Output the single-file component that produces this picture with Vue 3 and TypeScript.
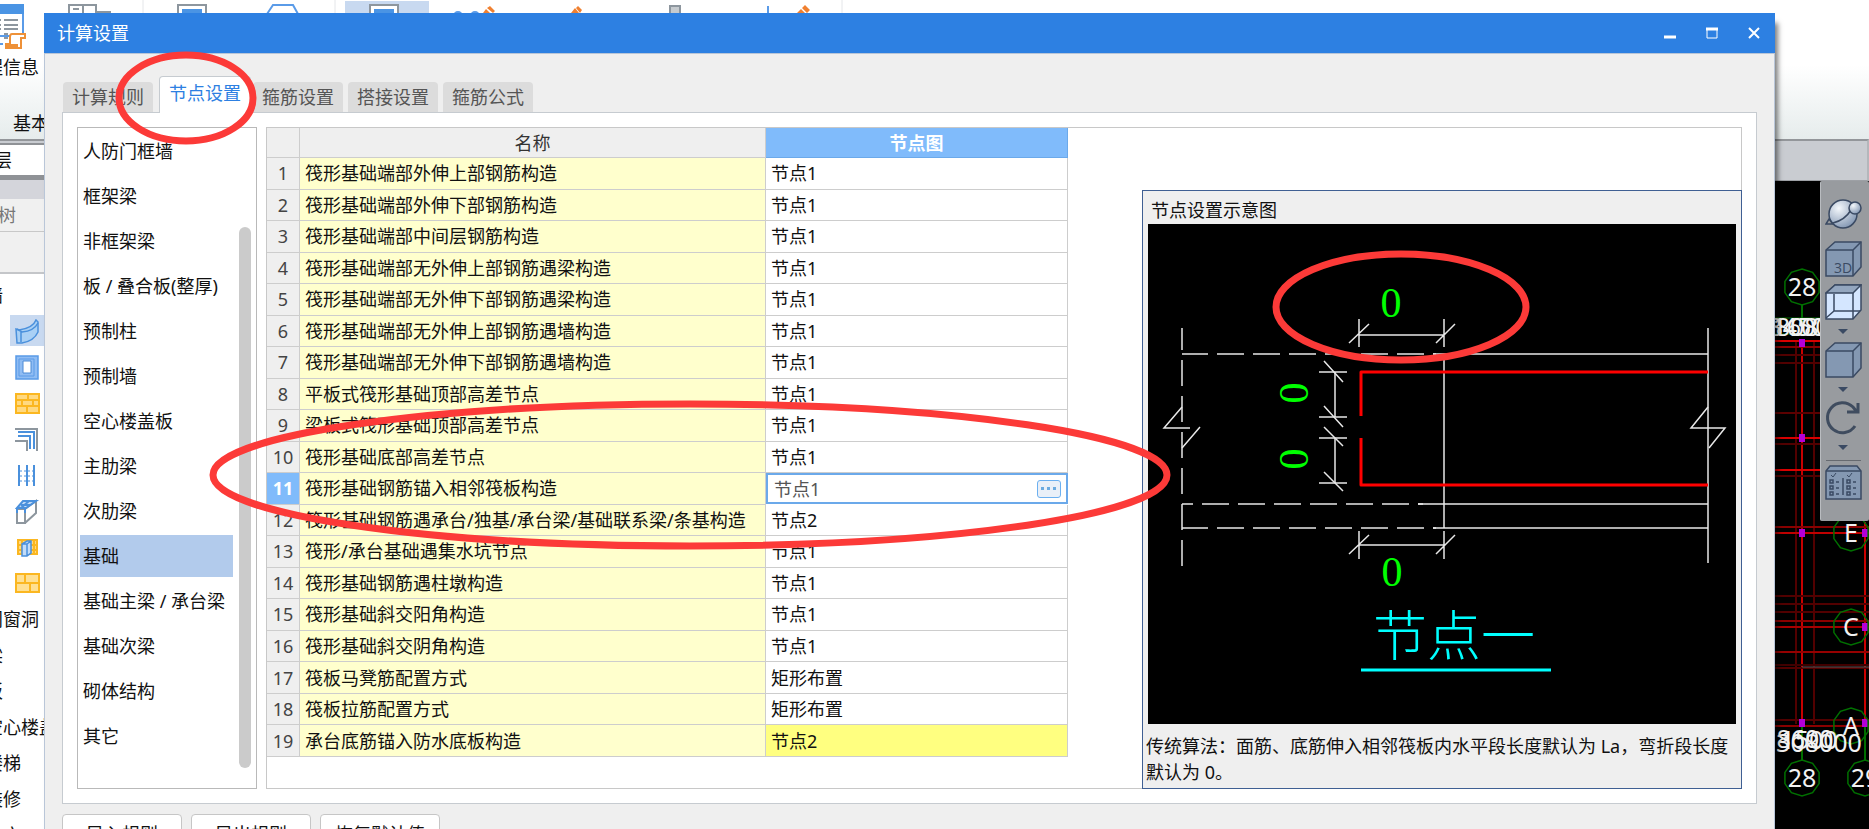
<script setup lang="ts">
import { ref } from 'vue'

interface Shape { d: string; fill?: string; stroke?: string; width?: number; dash?: string }
interface NodeRow { name: string; value: string }

const tabs = ['计算规则', '节点设置', '箍筋设置', '搭接设置', '箍筋公式']
const activeTab = ref('节点设置')

const categories = [
  '人防门框墙', '框架梁', '非框架梁', '板 / 叠合板(整厚)', '预制柱', '预制墙', '空心楼盖板',
  '主肋梁', '次肋梁', '基础', '基础主梁 / 承台梁', '基础次梁', '砌体结构', '其它',
]
const activeCategory = ref('基础')

const rows = ref<NodeRow[]>([
  { name: '筏形基础端部外伸上部钢筋构造', value: '节点1' },
  { name: '筏形基础端部外伸下部钢筋构造', value: '节点1' },
  { name: '筏形基础端部中间层钢筋构造', value: '节点1' },
  { name: '筏形基础端部无外伸上部钢筋遇梁构造', value: '节点1' },
  { name: '筏形基础端部无外伸下部钢筋遇梁构造', value: '节点1' },
  { name: '筏形基础端部无外伸上部钢筋遇墙构造', value: '节点1' },
  { name: '筏形基础端部无外伸下部钢筋遇墙构造', value: '节点1' },
  { name: '平板式筏形基础顶部高差节点', value: '节点1' },
  { name: '梁板式筏形基础顶部高差节点', value: '节点1' },
  { name: '筏形基础底部高差节点', value: '节点1' },
  { name: '筏形基础钢筋锚入相邻筏板构造', value: '节点1' },
  { name: '筏形基础钢筋遇承台/独基/承台梁/基础联系梁/条基构造', value: '节点2' },
  { name: '筏形/承台基础遇集水坑节点', value: '节点1' },
  { name: '筏形基础钢筋遇柱墩构造', value: '节点1' },
  { name: '筏形基础斜交阳角构造', value: '节点1' },
  { name: '筏形基础斜交阴角构造', value: '节点1' },
  { name: '筏板马凳筋配置方式', value: '矩形布置' },
  { name: '筏板拉筋配置方式', value: '矩形布置' },
  { name: '承台底筋锚入防水底板构造', value: '节点2' },
])
const selectedRow = ref(10)

const blue = '#4a90dc'
const grey = '#8d969e'
const amber = '#fbb721'
const treeIcons: { name: string; shapes: Shape[] }[] = [
  { name: '剪力墙', shapes: [
    { d: 'M1 10L4 11Q18 9 21 1L23 3V13Q19 22 7 24H2L1 10Z', fill: '#a9d0f5', stroke: blue, width: 1.5 },
    { d: 'M2 10L7 13Q19 12 23 4M6 13V23', stroke: blue, width: 1.5 },
  ] },
  { name: '柱', shapes: [
    { d: 'M1 1H23V24H1Z', fill: '#8fbcf3', stroke: '#5a9be8', width: 1.5 },
    { d: 'M4 4H19V21H4Z', stroke: '#5a9be8', width: 1 },
    { d: 'M8 6H16V18H8Z', fill: '#ffffff', stroke: '#4a8ad6', width: 1 },
  ] },
  { name: '砌体墙', shapes: [
    { d: 'M1 3H24V22H1Z', fill: '#ffd980', stroke: amber, width: 2 },
    { d: 'M1 9H24M1 15H24M13 3V9M7 9V15M18 9V15M12 15V22', stroke: amber, width: 2 },
  ] },
  { name: '幕墙', shapes: [
    { d: 'M0 2H22V24M0 14H12V24', stroke: grey, width: 2 },
    { d: 'M3 5H19V22M3 9H15V22', stroke: blue, width: 2 },
  ] },
  { name: '栅栏', shapes: [
    { d: 'M4 2V23M12 2V23M19 2V23', stroke: blue, width: 2 },
    { d: 'M5 8H18M5 13H18M5 18H18', stroke: blue, width: 1, dash: '2 2' },
  ] },
  { name: '保温墙', shapes: [
    { d: 'M2 10H10V24H2ZM10 24L21 14V2L10 10', fill: '#ffffff', stroke: grey, width: 2 },
    { d: 'M2 9L8 2H21L11 9ZM6 6L16 6M6 9L14 2M10 10V14M2 10V14', fill: '#c3dcf8', stroke: blue, width: 2 },
  ] },
  { name: '洞口', shapes: [
    { d: 'M3 5H22V19H3Z', fill: '#ffd980', stroke: amber, width: 2 },
    { d: 'M3 10H22M3 15H22M7 5V19M19 5V19', stroke: amber, width: 2 },
    { d: 'M7 9L12 6H16V18L12 21H7ZM12 9V21M12 9L16 6M7 9H12', fill: '#c3dcf8', stroke: blue, width: 1.5 },
  ] },
  { name: '填充墙', shapes: [
    { d: 'M1 3H24V21H1Z', fill: '#ffe092', stroke: amber, width: 2 },
    { d: 'M1 12H24M10 3V12M15 12V21', stroke: amber, width: 2 },
  ] },
]
const treeTexts = ['门窗洞', '梁', '板', '空心楼盖', '楼梯', '装修', '土方']

const cadHorizontals: [number, string][] = [
  [160, '#d90000'], [166, '#8a0000'], [174, '#520000'], [182, '#520000'], [232, '#5c0000'],
  [257, '#d90000'], [263, '#520000'], [289, '#d90000'], [295, '#520000'], [346, '#8a0000'],
  [352, '#c00000'], [415, '#520000'], [423, '#520000'], [431, '#520000'], [440, '#8a0000'],
  [446, '#a80000'], [471, '#960000'], [484, '#400000'], [487, '#520000'], [539, '#520000'], [545, '#8a0000'],
]
const cadVerticals: [number, string][] = [[21, '#520000'], [27, '#c80000'], [39, '#520000'], [90, '#c80000']]
const bubbles: [number, number, string][] = [
  [27, 106, '28'], [76, 352, 'E'], [76, 446, 'C'], [76, 545, 'A'], [27, 597, '28'], [90, 597, '29'],
]
const joints: [number, number][] = [[27, 162], [27, 257], [27, 352], [27, 542], [90, 352], [90, 446], [90, 542]]

function decagon(cx: number, cy: number): string {
  return Array.from({ length: 10 }, (_, i) => {
    const a = (Math.PI * (i * 36 - 90)) / 180
    return `${(cx + 18 * Math.cos(a)).toFixed(1)},${(cy + 18 * Math.sin(a)).toFixed(1)}`
  }).join(' ')
}
</script>

<template>
  <div class="desktop">
    <div class="host">
      <header class="ribbon">
        <svg class="ribbon-art" width="860" height="52" aria-hidden="true">
          <path d="M345 1H429V13H345Z" fill="#c8d9f0" />
          <path d="M143 0V13M335 0V13M842 0V13" stroke="#e4e6e9" />
          <g fill="#fff" stroke="#8d969e" stroke-width="2">
            <path d="M69 20V5H96V20M83 5V20M96 12H111M73 9H79" />
            <path d="M178 20V5H206V20M370 20V5H398V20" />
          </g>
          <path d="M182 9H202V20H182ZM374 9H394V20H374Z" fill="#4a94e4" />
          <path d="M267 14L273 5H293L298 14" fill="none" stroke="#5a9be8" stroke-width="2" />
          <g fill="none" stroke="#5a9be8" stroke-width="2"><circle cx="458" cy="16" r="4" /><circle cx="475" cy="16" r="4" /><path d="M768 6V14" /></g>
          <g fill="#f08030"><path d="M483 13L486 9L490 13ZM487 8L490 6L495 11L493 13ZM571 13L575 8L579 13ZM576 8L578 6L582 10L580 13ZM797 13L801 9L805 13ZM802 8L805 5L810 10L807 13Z" /></g>
          <path d="M670 14V6H680V14" fill="#c6cbcf" stroke="#8d969e" stroke-width="2" />
          <path d="M0 5H23V36H0" fill="#fff" stroke="#5a9be8" stroke-width="2" />
          <path d="M0 4H24V14H0Z" fill="#4a94e4" />
          <path d="M4 20H18M4 25H18M4 29H18M0 20H1M0 25H1M0 29H1M4 34H8M4 38H8" stroke="#8d969e" stroke-width="2" />
          <path d="M0 44H3" stroke="#5a9be8" stroke-width="2" />
          <path d="M12 34H25V38H21V48H6V44H10V37Q10 34 12 34Z" fill="#fff" stroke="#ee9138" stroke-width="2" />
          <path d="M5 44H18V49H5Z" fill="#ee9138" />
        </svg>
        <div class="ribbon-label">程信息</div>
        <div class="ribbon-group">基本</div>
      </header>
      <div class="subbar"></div>
      <div class="work">
        <aside class="side">
          <div class="floor"><span>首层</span></div>
          <div class="side-gap"></div>
          <div class="side-title"><span>件树</span></div>
          <div class="side-search"></div>
          <ul class="tree">
            <li class="tree-text">墙</li>
            <li v-for="(icon, i) in treeIcons" :key="icon.name" class="tree-icon" :class="{ on: i === 0 }">
              <svg width="25" height="25" role="img" :aria-label="icon.name">
                <path
                  v-for="(s, j) in icon.shapes" :key="j" :d="s.d" :fill="s.fill ?? 'none'"
                  :stroke="s.stroke" :stroke-width="s.width" :stroke-dasharray="s.dash"
                />
              </svg>
            </li>
            <li v-for="t in treeTexts" :key="t" class="tree-text">{{ t }}</li>
          </ul>
        </aside>
        <div class="cad">
          <svg class="cad-art" width="94" height="648" role="img" aria-label="轴网">
            <path v-for="[x, c] in cadVerticals" :key="x" :d="`M${x} ${x === 90 ? 341 : 159}V543`" :stroke="c" stroke-width="2" />
            <path v-for="[y, c] in cadHorizontals" :key="y" :d="`M0 ${y}H94`" :stroke="c" stroke-width="2" />
            <path d="M27 486H94" stroke="#555" />
            <path d="M27 124V150M27 546V579M90 546V579" stroke="#006e00" stroke-width="2" />
            <rect v-for="([x, y], i) in joints" :key="i" :x="x - 3" :y="y - 4" width="6" height="8" fill="#b400d8" />
            <g v-for="([x, y, t], i) in bubbles" :key="i">
              <polygon :points="decagon(x, y)" fill="none" stroke="#007000" stroke-width="1.5" />
              <text :x="x" :y="y + 9" class="cad-text">{{ t }}</text>
            </g>
            <path d="M0 137H45M0 153H45" stroke="#006e00" />
            <text x="15" y="155" class="cad-text">3808</text>
            <text x="22" y="155" class="cad-text">8450</text>
            <text x="26" y="155" class="cad-text">1600</text>
            <text x="44" y="571" class="cad-text">308000</text>
            <text x="34" y="568" class="cad-text">1500</text>
            <text x="30" y="567" class="cad-text">8600</text>
          </svg>
          <div class="view-tools">
            <button type="button" aria-label="动态观察">
              <svg width="37" height="32" fill="#93a6bf" stroke="#3a4a63" stroke-width="1.5">
                <defs><radialGradient id="ball" cx="35%" cy="30%" r="75%"><stop offset="0" stop-color="#f4f8fc" /><stop offset="1" stop-color="#8296b2" /></radialGradient></defs>
                <circle cx="18" cy="16" r="14" fill="url(#ball)" />
                <path d="M1 26L4 21L8 26Z" fill="none" /><path d="M8 25Q20 22 26 12" fill="none" />
                <circle cx="30" cy="10" r="6" fill="url(#ball)" />
              </svg>
            </button>
            <button type="button" aria-label="三维">
              <svg width="37" height="36" fill="#8498b2" stroke="#3a4a63" stroke-width="1.5">
                <path d="M1 9L10 1H36V26L28 35H1Z" /><path d="M1 9H28V35M28 9L36 1" fill="none" />
                <text x="18" y="32" class="cube-text">3D</text>
              </svg>
            </button>
            <button type="button" aria-label="线框">
              <svg width="37" height="36" fill="#d4e6ff" stroke="#3a4a63" stroke-width="1.5">
                <path d="M1 9L10 1H36V26L28 35H1Z" /><path d="M1 9L10 1H36L28 9Z" fill="#93a6bf" />
                <path d="M28 9V35M9 10V27H28M9 27L1 34M28 27L35 27" fill="none" />
              </svg>
            </button>
            <svg class="drop" width="10" height="6" aria-hidden="true"><path d="M0 0H10L5 5Z" fill="#3a4a63" /></svg>
            <button type="button" aria-label="实体">
              <svg width="37" height="36" fill="#8498b2" stroke="#3a4a63" stroke-width="1.5">
                <path d="M1 9L10 1H36V26L28 35H1Z" /><path d="M1 9H28V35M28 9L36 1" fill="none" />
              </svg>
            </button>
            <svg class="drop" width="10" height="6" aria-hidden="true"><path d="M0 0H10L5 5Z" fill="#3a4a63" /></svg>
            <button type="button" aria-label="旋转">
              <svg width="37" height="36" fill="none" stroke="#3f4c5f" stroke-width="3">
                <path d="M30 26A15 15 0 1 1 28 7L32 12M22 12H33V3" />
              </svg>
            </button>
            <svg class="drop" width="10" height="6" aria-hidden="true"><path d="M0 0H10L5 5Z" fill="#3a4a63" /></svg>
            <hr />
            <button type="button" aria-label="显示设置">
              <svg width="37" height="36" fill="#8498b2" stroke="#3a4a63" stroke-width="1.5">
                <path d="M1 6L5 1H32L36 6V34H1Z" /><path d="M1 6H36M18 13V30" fill="none" />
                <path d="M6 10L8 12L11 8M22 10L24 12L27 8" fill="none" stroke-width="1" />
                <path d="M5 15H8V18H5ZM5 21H8V24H5ZM5 27H8V30H5ZM22 15H25V18H22ZM22 21H25V24H22ZM22 27H25V30H22ZM11 17H14M11 23H14M11 29H14M28 17H31M28 23H31M28 29H31" fill="none" />
              </svg>
            </button>
          </div>
        </div>
      </div>
    </div>

    <section class="dialog" role="dialog" aria-labelledby="dlg-title">
      <div class="titlebar">
        <h1 id="dlg-title">计算设置</h1>
        <div class="win-buttons">
          <button type="button" aria-label="最小化"><svg width="12" height="12"><path d="M0 10H12" stroke="#fff" stroke-width="3" /></svg></button>
          <button type="button" aria-label="最大化"><svg width="12" height="12"><path d="M1 2H11V11H1Z" fill="none" stroke="#fff" /><path d="M0 2H12" stroke="#fff" stroke-width="3" /></svg></button>
          <button type="button" aria-label="关闭"><svg width="12" height="12"><path d="M1 1L11 11M11 1L1 11" stroke="#fff" stroke-width="2" /></svg></button>
        </div>
      </div>
      <div class="body">
        <div class="tabs" role="tablist">
          <button
            v-for="t in tabs" :key="t" type="button" role="tab" class="tab" :class="{ on: t === activeTab }"
            :aria-selected="t === activeTab" @click="activeTab = t"
          >{{ t }}</button>
        </div>
        <div class="panel">
          <div class="list">
            <ul>
              <li v-for="c in categories" :key="c">
                <button type="button" :class="{ on: c === activeCategory }" @click="activeCategory = c">{{ c }}</button>
              </li>
            </ul>
            <div class="scroll"><div class="thumb"></div></div>
          </div>
          <div class="sheet">
            <table>
              <colgroup><col class="c-no" /><col class="c-name" /><col class="c-val" /></colgroup>
              <thead>
                <tr><th></th><th scope="col">名称</th><th scope="col" class="on">节点图</th></tr>
              </thead>
              <tbody>
                <tr v-for="(r, i) in rows" :key="i">
                  <th scope="row" :class="{ on: i === selectedRow }">{{ i + 1 }}</th>
                  <td class="name">{{ r.name }}</td>
                  <td v-if="i === selectedRow" class="edit">
                    <div class="editor">
                      <input v-model="r.value" type="text" aria-label="节点图" />
                      <button type="button" aria-label="选择节点"><svg width="16" height="4"><path d="M0 0H3V3H0ZM6 0H9V3H6ZM12 0H15V3H12Z" fill="#6cabe0" /></svg></button>
                    </div>
                  </td>
                  <td v-else :class="{ changed: i === rows.length - 1 }" @click="selectedRow = i">{{ r.value }}</td>
                </tr>
              </tbody>
            </table>
            <figure class="preview">
              <h2>节点设置示意图</h2>
              <svg viewBox="0 0 588 500" role="img" aria-label="节点一">
                <rect width="588" height="500" fill="#000" />
                <g fill="none" stroke="#e8e8e8" stroke-width="1.5">
                  <path d="M34 104V343" stroke-dasharray="26 10" stroke-dashoffset="4" />
                  <path d="M34 130H288M34 304H288" stroke-dasharray="27 9" stroke-dashoffset="1" />
                  <path d="M34 280H275" stroke-dasharray="27 9" stroke-dashoffset="16" />
                  <path d="M285 130H560M270 280H560M285 304H560M296 130V304M560 104V339" />
                  <path d="M211 111H296M211 95V123M296 95V123M201 119L221 100M288 119L307 100" />
                  <path d="M211 321H296M211 307V335M296 307V335M201 330L221 311M288 330L307 311" />
                  <path d="M187 148V193M187 214V259M171 148H199M171 193H199M171 214H199M171 259H199" />
                  <path d="M176 137L195 158M176 182L195 203M176 203L195 222M176 248L195 267" />
                  <path d="M34 183L16 204H42M52 203L34 224M560 183L543 204H577L561 224" />
                </g>
                <path d="M213 192V148H560M213 214V261H560" fill="none" stroke="#f00" stroke-width="3" stroke-linejoin="round" />
                <g class="zero">
                  <text x="243" y="93">0</text>
                  <text x="244" y="362">0</text>
                  <text transform="translate(160 169) rotate(-90)">0</text>
                  <text transform="translate(160 235) rotate(-90)">0</text>
                </g>
                <text x="306" y="432" class="node-title">节点一</text>
                <path d="M213 446H403" stroke="#0ff" stroke-width="3" />
              </svg>
              <figcaption>传统算法：面筋、底筋伸入相邻筏板内水平段长度默认为 La，弯折段长度默认为 0。</figcaption>
            </figure>
          </div>
        </div>
        <div class="actions">
          <button type="button">导入规则</button>
          <button type="button">导出规则</button>
          <button type="button">恢复默认值</button>
        </div>
      </div>
    </section>

    <svg class="marks" width="1869" height="829" fill="none" stroke="#fc3a38" stroke-width="7" aria-hidden="true">
      <ellipse cx="186" cy="98" rx="67" ry="43" />
      <ellipse cx="690" cy="475" rx="477" ry="71" />
      <ellipse cx="1401" cy="307" rx="125" ry="53" />
    </svg>
  </div>
</template>

<style>
body { margin: 0; }
</style>

<style scoped>
.desktop {
  position: relative; height: 100vh; overflow: hidden; background: #fff; color: #111;
  font: 18px/24px "Noto Sans", "Noto Sans CJK SC", sans-serif;
}
.desktop *, .desktop *::before { box-sizing: border-box; }
button, input { font: inherit; color: inherit; margin: 0; padding: 0; border: 0; background: none; }
ul { list-style: none; margin: 0; padding: 0; }

.host { display: flex; flex-direction: column; height: 100%; }
.ribbon { position: relative; flex: none; height: 139px; background: linear-gradient(#fff 65px, #e6ecec); }
.ribbon-art { display: block; }
.ribbon-label { width: 39px; height: 24px; margin-top: 3px; display: flex; justify-content: flex-end; overflow: hidden; white-space: nowrap; }
.ribbon-group { margin: 32px 0 0 13px; }
.subbar { flex: none; height: 42px; background: #c9ccd1; border-top: 2px solid #93969a; border-bottom: 1px solid #9da0a5; border-right: 2px solid #b4b7bb; }
.work { flex: 1; min-height: 0; display: flex; justify-content: space-between; }
.side { width: 44px; overflow: hidden; margin-top: -38px; background: #fff; }
.floor { height: 34px; border: solid #8f9296; border-width: 2px 0; display: flex; align-items: center; background: #fff; }
.floor span, .side-title span { width: 12px; display: flex; justify-content: flex-end; white-space: nowrap; }
.side-gap { height: 22px; background: #d4d5db; border-top: 3px solid #8f9296; }
.side-title { height: 33px; display: flex; align-items: center; background: #f0f0f0; border-bottom: 1px solid #c8c8c8; color: #777; }
.side-title span { width: 16px; }
.side-search { height: 42px; background: #f0f0f0; border-bottom: 2px solid #c4c6c9; }
.tree { padding-top: 3px; }
.tree li { height: 36px; display: flex; align-items: center; white-space: nowrap; }
.tree-text { justify-content: flex-start; margin-left: -15px; }
.tree-icon { padding-left: 15px; }
.tree-icon.on { margin-left: 10px; padding-left: 5px; background: linear-gradient(#c8d9f0, #c8d9f0) 0 2px / 100% 31px no-repeat; }

.cad { position: relative; width: 94px; background: #000; overflow: hidden; }
.cad-art { display: block; }
.cad-text { font: 25px "Noto Sans", sans-serif; fill: #f2f2f2; text-anchor: middle; }
.view-tools {
  position: absolute; top: 0; right: 0; width: 49px; height: 340px; padding-top: 17px; padding-left: 4px;
  background: #989b9f; border-left: 1px solid #b9bcc0; border-radius: 2px;
  display: flex; flex-direction: column; align-items: flex-start;
}
.view-tools button { display: flex; flex: none; height: 36px; margin-bottom: 7px; }
.view-tools .drop { flex: none; margin: 2px 0 7px 13px; }
.view-tools hr { width: 35px; margin: 2px 0 4px 1px; border: 0; border-top: 1px solid #666a70; }
.cube-text { font: 14px "Open Sans", sans-serif; fill: #3a4a63; stroke: none; text-anchor: middle; }

.dialog {
  position: absolute; left: 44px; right: 94px; top: 13px; background: #efefef;
  box-shadow: 4px 9px 5px -1px rgba(0, 0, 0, .5);
}
.titlebar { height: 40px; padding: 0 15px 0 13px; display: flex; align-items: center; justify-content: space-between; background: #2d80e2; color: #fff; }
.titlebar h1 { margin: 0; font-size: 18px; font-weight: 400; line-height: 24px; }
.win-buttons { display: flex; gap: 30px; }
.win-buttons button { display: flex; }
.body { padding: 22px 17px 16px; border: solid #b9c6d8; border-width: 1px 1px 0; }

.tabs { display: flex; align-items: flex-end; gap: 5px; padding-left: 1px; height: 36px; }
.tab { height: 30px; padding: 0 9px; background: #dcdcdc; color: #555; border-radius: 4px 4px 0 0; }
.tab.on { position: relative; height: 37px; margin: 0 -3px -1px 1px; padding: 0 9px 4px; background: #fff; color: #2d80e2; border: 1px solid #c6cbd0; border-bottom: 0; }
.panel { display: flex; gap: 9px; padding: 14px; background: #fff; border: 1px solid #c6cbd0; }

.list { flex: none; width: 180px; display: flex; justify-content: space-between; border: 1px solid #b9b9b9; }
.list ul { width: 155px; padding: 2px 0 0 2px; }
.list li { height: 42px; margin-bottom: 3px; }
.list button { width: 100%; height: 100%; padding-left: 3px; text-align: left; white-space: nowrap; }
.list button.on { background: #b2cbec; }
.scroll { width: 17px; padding: 99px 5px 20px 0; display: flex; }
.thumb { flex: 1; background: #cbcbcb; border-radius: 6px; }

.sheet { flex: 1; min-width: 0; display: flex; justify-content: space-between; align-items: flex-start; border: 1px solid #c8c8c8; }
table { flex: none; width: 801px; height: 629px; table-layout: fixed; border-collapse: separate; border-spacing: 0; }
.c-no { width: 33px; }
.c-name { width: 466px; }
.c-val { width: 302px; }
th, td { padding: 0; height: 31px; border: solid #cdcdcd; border-width: 0 1px 1px 0; line-height: 24px; font-weight: 400; white-space: nowrap; }
thead th { height: 30px; background: #efefef; color: #333; }
thead th.on { background: #80bbfb; color: #fff; font-weight: 700; border-color: #6ba9ea; }
tbody th { background: #efefef; color: #444; text-align: center; }
tbody th.on { background: #80bbfb; color: #fff; font-weight: 700; }
td { padding-left: 5px; background: #fff; }
td.name { background: #ffffcd; }
td.changed { background: #ffff80; }
td.edit { padding: 0; border: 0; }
.editor { display: flex; align-items: center; height: 31px; padding: 0 5px 0 6px; border: 2px solid #6ba9ea; }
.editor input { flex: 1; min-width: 0; height: 24px; color: #555; outline: 0; }
.editor button { width: 24px; height: 18px; display: flex; align-items: center; justify-content: center; background: #eaf0f8; border: 1px solid #6cb0f0; border-radius: 3px; }

.preview { flex: none; width: 600px; margin: 62px -1px -1px 0; padding: 0 5px 3px; background: #efefef; border: 1px solid #3f5f93; position: relative; }
.preview h2 { margin: 0; padding: 7px 0 2px 3px; font-size: 18px; font-weight: 400; line-height: 24px; }
.preview svg { display: block; width: 588px; height: 500px; }
.preview figcaption { margin: 0 -2px; padding: 9px 0 0; line-height: 26px; }
.zero { font: 42px "Liberation Serif", serif; fill: #0f0; text-anchor: middle; }
.node-title { font: 300 54px "Noto Sans CJK SC", sans-serif; fill: #0ff; text-anchor: middle; }

.actions { display: flex; gap: 9px; margin-top: 10px; }
.actions button { width: 120px; height: 40px; background: #fff; border: 1px solid #c6c6c6; border-radius: 4px; }
.marks { position: absolute; left: 0; top: 0; pointer-events: none; }
</style>
